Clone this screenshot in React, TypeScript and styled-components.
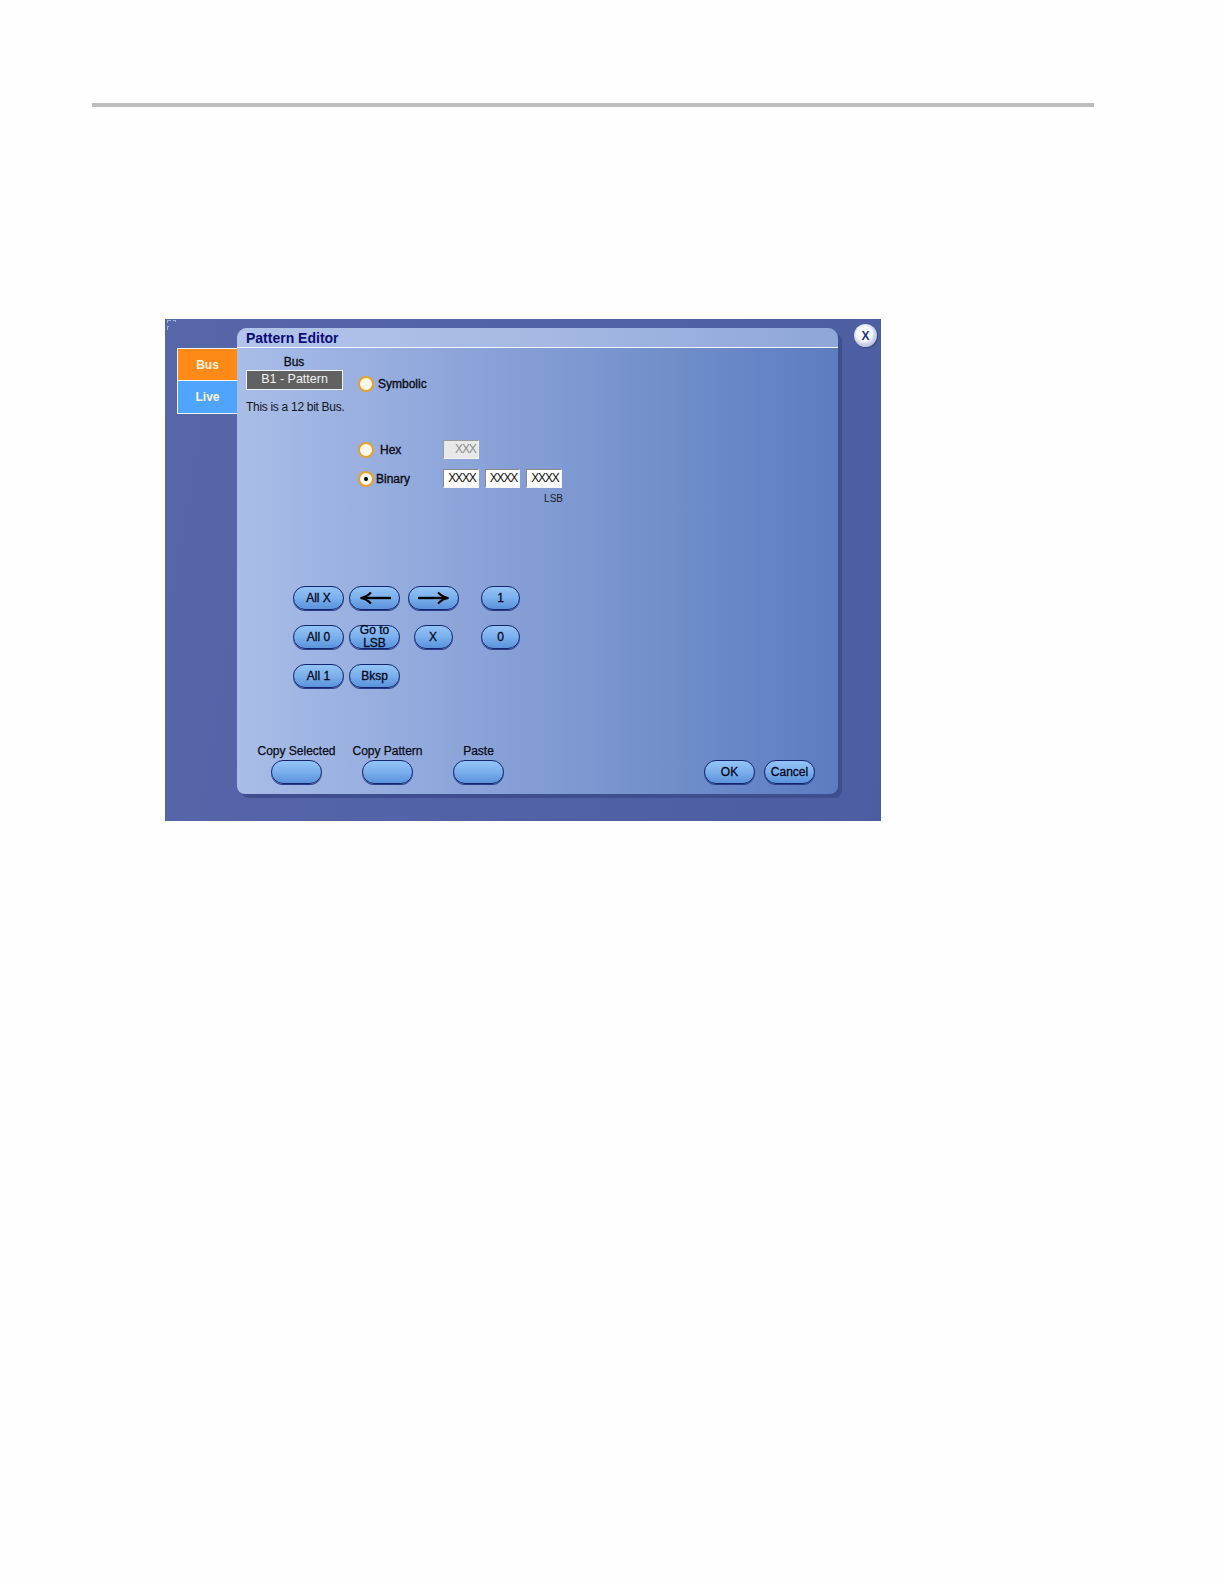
import styled, { createGlobalStyle } from 'styled-components';

const GlobalStyle = createGlobalStyle`
  html, body {
    margin: 0;
    padding: 0;
    background: #fefefe;
    font-family: "Liberation Sans", Arial, sans-serif;
  }
`;

const Page = styled.div`
  width: 1224px;
  height: 1584px;
  padding: 103px 0 0 92px;
  box-sizing: border-box;
  overflow: hidden;
`;

const Rule = styled.div`
  width: 1002px;
  height: 4px;
  background: #bcbcbc;
`;

const Dialog = styled.div`
  position: relative;
  display: flex;
  align-items: flex-start;
  width: 716px;
  height: 502px;
  margin: 212px 0 0 73px;
  padding: 9px 0 0 12px;
  box-sizing: border-box;
  background: linear-gradient(100deg, #5666a9 0%, #4d5da2 100%);
`;

const Grip = styled.svg`
  position: absolute;
  left: 1px;
  top: 1px;
`;

const Tabs = styled.div`
  display: flex;
  flex-direction: column;
  width: 60px;
  margin-top: 20px;
`;

const Tab = styled.div<{ $active?: boolean }>`
  height: 33px;
  box-sizing: border-box;
  border: 1px solid #f2f5fc;
  border-right: none;
  border-top-width: ${(p) => (p.$active ? '1px' : '0')};
  background: ${(p) => (p.$active ? '#fd8a16' : '#4ea5fb')};
  color: #fff4e0;
  font-size: 12px;
  font-weight: 700;
  text-align: center;
  line-height: ${(p) => (p.$active ? '32px' : '33px')};
`;

const Panel = styled.div`
  display: flex;
  flex-direction: column;
  width: 601px;
  height: 466px;
  border-radius: 10px 10px 8px 8px;
  background: linear-gradient(90deg, #a9bde8 0%, #8aa3d8 40%, #5c7cc0 100%);
  box-shadow: 4px 4px 0 #3f4e8e;
`;

const TitleBar = styled.div`
  height: 19px;
  padding-left: 9px;
  border-bottom: 1px solid #f1f5fc;
  border-radius: 10px 10px 0 0;
  background: linear-gradient(90deg, #b3c4ea 0%, #a5b9e3 50%, #8ea6d8 100%);
  color: #0b0b78;
  font-size: 14px;
  font-weight: 700;
  line-height: 21px;
`;

const TopRow = styled.div`
  display: flex;
  align-items: flex-start;
  padding: 7px 0 0 9px;
  height: 92px;
  box-sizing: border-box;
`;

const BusGroup = styled.div`
  display: flex;
  flex-direction: column;
  width: 112px;
  flex: none;
`;

const BusLabel = styled.div`
  width: 96px;
  height: 15px;
  color: #0a0a14;
  font-size: 12px;
  line-height: 14px;
  text-align: center;
  -webkit-text-stroke: 0.3px #0a0a14;
`;

const BusValue = styled.div`
  width: 97px;
  height: 20px;
  box-sizing: border-box;
  border: 1px solid #f0f4fb;
  background: #616161;
  color: #f3f3f3;
  font-size: 12.5px;
  line-height: 17px;
  text-align: center;
`;

const BusNote = styled.div`
  margin-top: 10px;
  color: #14141e;
  font-size: 12px;
  letter-spacing: -0.3px;
  line-height: 14px;
  white-space: nowrap;
`;

const Radio = styled.span<{ $checked?: boolean }>`
  display: flex;
  align-items: center;
  justify-content: center;
  width: 16px;
  height: 16px;
  flex: none;
  box-sizing: border-box;
  border: 2px solid #e8a22c;
  border-radius: 50%;
  background: #fdf8ec;
  &::after {
    content: '';
    display: ${(p) => (p.$checked ? 'block' : 'none')};
    width: 4px;
    height: 4px;
    border-radius: 50%;
    background: #000;
  }
`;

const RadioRow = styled.div<{ $height: number }>`
  display: flex;
  align-items: center;
  height: ${(p) => p.$height}px;
`;

const SymbolicRow = styled(RadioRow)`
  margin-top: 21px;
`;

const RadioLabel = styled.span<{ $width: number; $indent?: number }>`
  width: ${(p) => p.$width}px;
  padding-left: ${(p) => p.$indent ?? 2}px;
  box-sizing: border-box;
  color: #0a0a14;
  font-size: 12px;
  line-height: 14px;
  -webkit-text-stroke: 0.35px #0a0a14;
`;

const FormatSection = styled.div`
  display: flex;
  flex-direction: column;
  gap: 10px;
  padding-left: 121px;
`;

const Fields = styled.div`
  display: flex;
  gap: 6px;
`;

const Field = styled.div<{ $disabled?: boolean }>`
  width: 35.5px;
  height: 19px;
  box-sizing: border-box;
  padding-right: 2px;
  border: 1px solid;
  border-color: ${(p) => (p.$disabled ? '#9a9a9a #f4f4f4 #f4f4f4 #9a9a9a' : '#8a8a8a #f4f4f4 #f4f4f4 #8a8a8a')};
  background: ${(p) => (p.$disabled ? '#e8e8e8' : '#ffffff')};
  color: ${(p) => (p.$disabled ? '#8c8c8c' : '#111111')};
  font-size: 12px;
  letter-spacing: -1.2px;
  line-height: 17px;
  text-align: right;
  overflow: hidden;
`;

const LsbNote = styled.div`
  width: 205px;
  margin: -5px 0 0 0;
  color: #1c1c2a;
  font-size: 10px;
  line-height: 12px;
  text-align: right;
`;

const Keypad = styled.div`
  display: grid;
  grid-template-columns: 51px 51px 56px 54px;
  grid-auto-rows: 24px;
  column-gap: 5px;
  row-gap: 15px;
  margin: 81px 0 0 56px;
`;

const Button = styled.button<{ $narrow?: boolean; $wrap?: boolean }>`
  width: ${(p) => (p.$narrow ? '39px' : '51px')};
  height: 24px;
  padding: ${(p) => (p.$wrap ? '0 6px' : '0')};
  box-sizing: border-box;
  display: flex;
  align-items: center;
  justify-content: center;
  justify-self: center;
  border: 1px solid #14246e;
  border-radius: 12px;
  background: linear-gradient(180deg, #93c4f7 0%, #7eb2ee 45%, #5a93dc 100%);
  box-shadow: 0 1px 0 #2a3c86;
  color: #06061a;
  font-family: inherit;
  font-size: 12px;
  line-height: 13px;
  -webkit-text-stroke: 0.3px #06061a;
`;

const RightButton = styled(Button)`
  justify-self: end;
`;

const NudgedButton = styled(Button)`
  justify-self: start;
  margin-left: 3px;
`;

const ArrowIcon = styled.svg`
  display: block;
`;

const Footer = styled.div`
  display: flex;
  align-items: flex-end;
  justify-content: space-between;
  margin-top: auto;
  padding: 0 23px 10px 14px;
`;

const CopyGroup = styled.div`
  display: flex;
`;

const LabeledAction = styled.div`
  display: flex;
  flex-direction: column;
  align-items: center;
  width: 91px;
  gap: 2px;
`;

const ActionLabel = styled.div`
  color: #0a0a14;
  font-size: 12px;
  line-height: 14px;
  white-space: nowrap;
  -webkit-text-stroke: 0.25px #0a0a14;
`;

const DialogActions = styled.div`
  display: flex;
  gap: 9px;
`;

const CloseButton = styled.div`
  display: flex;
  align-items: center;
  justify-content: center;
  width: 23px;
  height: 23px;
  margin: -4px 0 0 16px;
  flex: none;
  border-radius: 50%;
  background: radial-gradient(circle at 45% 42%, #ffffff 0 38%, #d3d8ea 55%, #8c97c2 100%);
  box-shadow: 1px 1px 1px #39467f;
  color: #23307f;
  font-size: 12px;
  font-weight: 700;
`;

const Arrow = ({ left }: { left?: boolean }) => (
  <ArrowIcon width="32" height="14" viewBox="0 0 32 14">
    <g transform={left ? 'translate(32 0) scale(-1 1)' : undefined}>
      <path d="M0 7H29" stroke="#000" strokeWidth="2.4" fill="none" />
      <path d="M20 1.5C23 4.5 26 6.5 30.5 7C26 7.5 23 9.5 20 12.5" stroke="#000" strokeWidth="2.2" fill="none" />
    </g>
  </ArrowIcon>
);

const App = () => (
  <>
    <GlobalStyle />
    <Page>
      <Rule />
      <Dialog>
        <Grip width="11" height="11" viewBox="0 0 11 11">
          <path d="M1 0h4v1H2v2H1zM7 0h3v2H9V1H7zM1 6h2v1H2v3H1z" fill="#a3acd4" />
        </Grip>
        <Tabs>
          <Tab $active>Bus</Tab>
          <Tab>Live</Tab>
        </Tabs>
        <Panel>
          <TitleBar>Pattern Editor</TitleBar>
          <TopRow>
            <BusGroup>
              <BusLabel>Bus</BusLabel>
              <BusValue>B1 - Pattern</BusValue>
              <BusNote>This is a 12 bit Bus.</BusNote>
            </BusGroup>
            <SymbolicRow $height={16}>
              <Radio />
              <RadioLabel $width={70} $indent={4}>Symbolic</RadioLabel>
            </SymbolicRow>
          </TopRow>
          <FormatSection>
            <RadioRow $height={19}>
              <Radio />
              <RadioLabel $width={69} $indent={6}>Hex</RadioLabel>
              <Fields>
                <Field $disabled>XXX</Field>
              </Fields>
            </RadioRow>
            <RadioRow $height={19}>
              <Radio $checked />
              <RadioLabel $width={69}>Binary</RadioLabel>
              <Fields>
                <Field>XXXX</Field>
                <Field>XXXX</Field>
                <Field>XXXX</Field>
              </Fields>
            </RadioRow>
            <LsbNote>LSB</LsbNote>
          </FormatSection>
          <Keypad>
            <Button>All X</Button>
            <Button><Arrow left /></Button>
            <NudgedButton><Arrow /></NudgedButton>
            <RightButton $narrow>1</RightButton>
            <Button>All 0</Button>
            <Button $wrap>Go to LSB</Button>
            <Button $narrow>X</Button>
            <RightButton $narrow>0</RightButton>
            <Button>All 1</Button>
            <Button>Bksp</Button>
          </Keypad>
          <Footer>
            <CopyGroup>
              <LabeledAction>
                <ActionLabel>Copy Selected</ActionLabel>
                <Button />
              </LabeledAction>
              <LabeledAction>
                <ActionLabel>Copy Pattern</ActionLabel>
                <Button />
              </LabeledAction>
              <LabeledAction>
                <ActionLabel>Paste</ActionLabel>
                <Button />
              </LabeledAction>
            </CopyGroup>
            <DialogActions>
              <Button>OK</Button>
              <Button>Cancel</Button>
            </DialogActions>
          </Footer>
        </Panel>
        <CloseButton>X</CloseButton>
      </Dialog>
    </Page>
  </>
);

export default App;
